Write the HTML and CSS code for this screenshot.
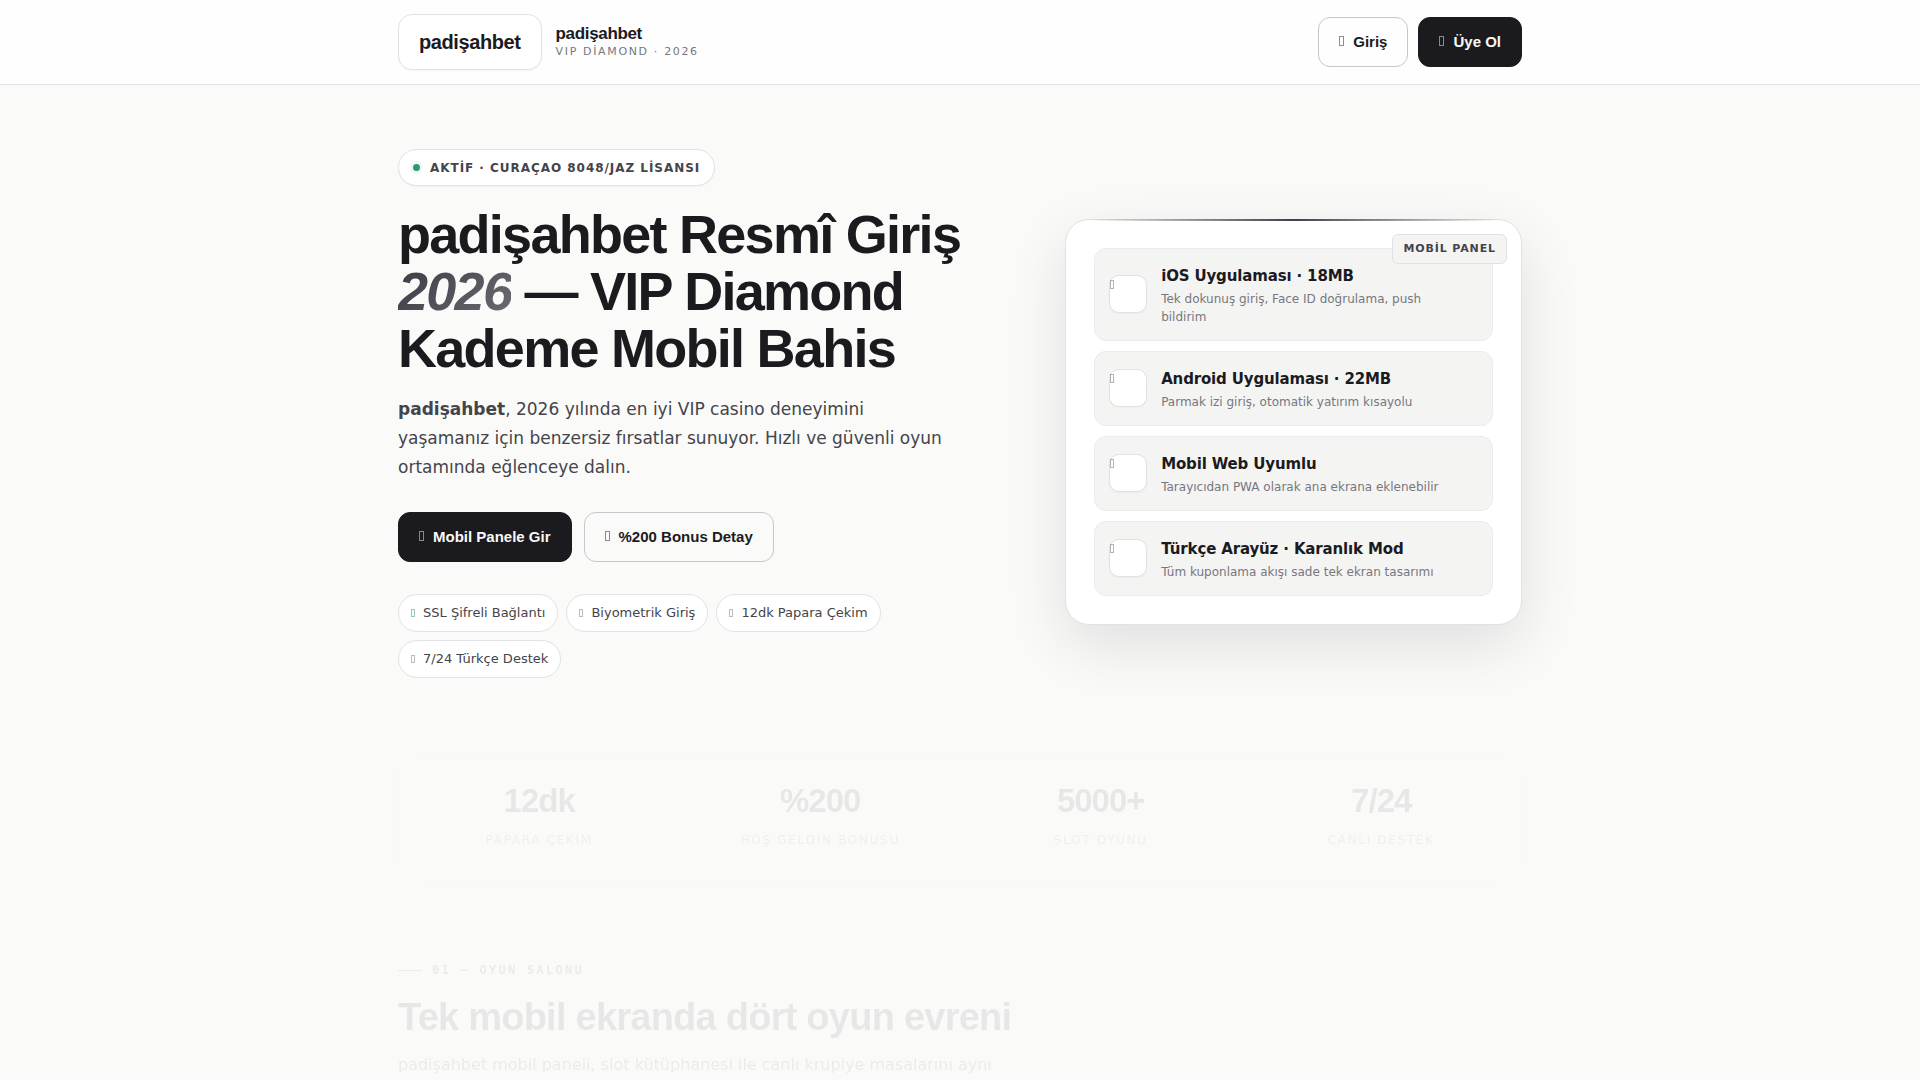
FILE: index.html
```html
<!DOCTYPE html>
<html lang="tr">
<head>
    <meta charset="UTF-8">
    <meta name="viewport" content="width=device-width, initial-scale=1.0">
    <title>padişahbet Resmî Giriş 2026</title>
    <link rel="stylesheet" href="styles.css">
</head>
<body>
    <!-- Üst menü -->
    <header class="site-header">
        <div class="container header-inner">
            <a href="#" class="brand">
                <span class="brand-logo">padişahbet</span>
                <span class="brand-text">
                    <span class="brand-name">padişahbet</span>
                    <span class="brand-sub">VIP DİAMOND · 2026</span>
                </span>
            </a>
            <div class="header-actions">
                <button type="button" class="btn btn-outline"><i class="icon"></i>Giriş</button>
                <button type="button" class="btn btn-dark"><i class="icon"></i>Üye Ol</button>
            </div>
        </div>
    </header>

    <main>
        <!-- Hero -->
        <section class="container hero">
            <div class="hero-left">
                <div class="license"><span class="dot"></span>AKTİF · CURAÇAO 8048/JAZ LİSANSI</div>
                <h1>padişahbet Resmî Giriş <em>2026</em> — VIP Diamond Kademe Mobil Bahis</h1>
                <p class="lead"><strong>padişahbet</strong>, 2026 yılında en iyi VIP casino deneyimini yaşamanız için benzersiz fırsatlar sunuyor. Hızlı ve güvenli oyun ortamında eğlenceye dalın.</p>
                <div class="hero-buttons">
                    <button type="button" class="btn btn-dark"><i class="icon"></i>Mobil Panele Gir</button>
                    <button type="button" class="btn btn-outline"><i class="icon"></i>%200 Bonus Detay</button>
                </div>
                <ul class="chips">
                    <li><i class="icon icon-green"></i>SSL Şifreli Bağlantı</li>
                    <li><i class="icon"></i>Biyometrik Giriş</li>
                    <li><i class="icon"></i>12dk Papara Çekim</li>
                    <li><i class="icon"></i>7/24 Türkçe Destek</li>
                </ul>
            </div>

            <div class="panel">
                <div class="feature">
                    <div class="feature-icon"><i class="icon"></i></div>
                    <div>
                        <h3>iOS Uygulaması · 18MB</h3>
                        <p>Tek dokunuş giriş, Face ID doğrulama, push bildirim</p>
                    </div>
                </div>
                <div class="feature">
                    <div class="feature-icon"><i class="icon"></i></div>
                    <div>
                        <h3>Android Uygulaması · 22MB</h3>
                        <p>Parmak izi giriş, otomatik yatırım kısayolu</p>
                    </div>
                </div>
                <div class="feature">
                    <div class="feature-icon"><i class="icon"></i></div>
                    <div>
                        <h3>Mobil Web Uyumlu</h3>
                        <p>Tarayıcıdan PWA olarak ana ekrana eklenebilir</p>
                    </div>
                </div>
                <div class="feature">
                    <div class="feature-icon"><i class="icon"></i></div>
                    <div>
                        <h3>Türkçe Arayüz · Karanlık Mod</h3>
                        <p>Tüm kuponlama akışı sade tek ekran tasarımı</p>
                    </div>
                </div>
                <span class="panel-tag">MOBİL PANEL</span>
            </div>
        </section>

        <!-- Rakamlar -->
        <section class="container">
            <div class="stats reveal">
                <div class="stat"><b>12dk</b><span>PAPARA ÇEKİM</span></div>
                <div class="stat"><b>%200</b><span>HOŞ GELDİN BONUSU</span></div>
                <div class="stat"><b>5000+</b><span>SLOT OYUNU</span></div>
                <div class="stat"><b>7/24</b><span>CANLI DESTEK</span></div>
            </div>
        </section>

        <!-- Oyun salonu -->
        <section class="container games">
            <div class="section-head reveal">
                <div class="eyebrow">01 — OYUN SALONU</div>
                <h2>Tek mobil ekranda dört oyun evreni</h2>
                <p>padişahbet mobil paneli, slot kütüphanesi ile canlı krupiye masalarını aynı</p>
            </div>
        </section>
    </main>
</body>
</html>
```

FILE: styles.css
```css
:root {
    --ink: #1b1b1f;
    --text: #44444b;
    --muted: #77777f;
    --line: #e2e2e6;
    --line-dark: #c6c6cd;
    --bg: #fafaf9;
    --soft: #f4f4f3;
    --green: #2f9873;
    --head: "Liberation Sans", Arial, sans-serif;
    --body: "DejaVu Sans", Verdana, sans-serif;
}
* {
    box-sizing: border-box;
    margin: 0;
    padding: 0;
}
body {
    background: var(--bg);
    color: var(--text);
    font-family: var(--body);
    font-size: 16px;
}
.container {
    max-width: 1180px;
    margin: 0 auto;
    padding: 0 28px;
}

/* Üst menü */
.site-header {
    background: #fefefe;
    border-bottom: 1px solid var(--line);
}
.header-inner {
    display: flex;
    justify-content: space-between;
    align-items: center;
    padding-top: 14px;
    padding-bottom: 14px;
}
.brand {
    display: flex;
    align-items: center;
    gap: 14px;
    text-decoration: none;
}
.brand-logo {
    padding: 0 20px;
    border: 1px solid var(--line);
    border-radius: 14px;
    background: #fff;
    box-shadow: 0 1px 2px rgba(0, 0, 0, 0.04);
    color: var(--ink);
    font: bold 20px/54px var(--head);
    letter-spacing: -0.02em;
}
.brand-text {
    display: flex;
    flex-direction: column;
}
.brand-name {
    color: var(--ink);
    font: bold 17px/20px var(--head);
    letter-spacing: -0.02em;
}
.brand-sub {
    color: var(--muted);
    font-size: 11px;
    line-height: 16px;
    letter-spacing: 0.15em;
}
.header-actions,
.hero-buttons {
    display: flex;
    gap: 10px;
}

/* Butonlar */
.btn {
    display: inline-flex;
    align-items: center;
    gap: 9px;
    height: 50px;
    padding: 0 20px;
    border: 1px solid var(--ink);
    border-radius: 12px;
    font: bold 15px/24px var(--head);
    cursor: pointer;
}
.btn-dark {
    background: var(--ink);
    color: #f8f8f7;
}
.btn-outline {
    background: transparent;
    border-color: var(--line-dark);
    color: var(--ink);
}
.icon {
    flex: none;
    width: 5px;
    height: 10px;
    border: 1px solid currentColor;
    opacity: 0.5;
}
.btn .icon {
    margin-bottom: 2px;
}

/* Hero */
.hero {
    display: grid;
    grid-template-columns: 1.2fr 0.9fr;
    gap: 58px;
    align-items: center;
    padding-top: 64px;
    padding-bottom: 61px;
}
.hero-left {
    padding-bottom: 16px;
}
.license {
    display: inline-flex;
    align-items: center;
    gap: 10px;
    height: 37px;
    padding: 0 14px;
    border: 1px solid var(--line);
    border-radius: 20px;
    background: #fff;
    box-shadow: 0 1px 2px rgba(0, 0, 0, 0.04);
    font-size: 12px;
    font-weight: bold;
    letter-spacing: 0.08em;
}
.dot {
    width: 7px;
    height: 7px;
    border-radius: 50%;
    background: var(--green);
    box-shadow: 0 0 0 3px rgba(47, 152, 115, 0.08);
}
h1 {
    margin: 20px 0 18px;
    color: var(--ink);
    font: bold 54px/57px var(--head);
    letter-spacing: -0.032em;
}
h1 em {
    background: linear-gradient(135deg, #3a3a42, #6c6c75);
    -webkit-background-clip: text;
    background-clip: text;
    color: transparent;
}
.lead {
    max-width: 560px;
    margin-bottom: 30px;
    font-size: 17px;
    line-height: 29px;
}
.hero-buttons {
    gap: 12px;
    margin-bottom: 32px;
}
.chips {
    display: flex;
    flex-wrap: wrap;
    gap: 8px;
    list-style: none;
}
.chips li {
    display: flex;
    align-items: center;
    gap: 8px;
    height: 38px;
    padding: 0 12px;
    border: 1px solid var(--line);
    border-radius: 20px;
    background: #fff;
    font-size: 13px;
    line-height: 20px;
}
.chips .icon {
    width: 4px;
    height: 8px;
    opacity: 0.35;
}
.chips .icon-green {
    border-color: var(--green);
    opacity: 0.5;
}

/* Mobil panel kartı */
.panel {
    position: relative;
    display: grid;
    gap: 10px;
    padding: 28px;
    border: 1px solid var(--line);
    border-radius: 24px;
    background: #fff;
    box-shadow: 0 20px 60px rgba(0, 0, 0, 0.11);
}
.panel::before {
    content: "";
    position: absolute;
    top: -1px;
    left: 20px;
    right: 20px;
    height: 2px;
    background: linear-gradient(90deg, transparent, #3f3f46, transparent);
}
.panel-tag {
    position: absolute;
    top: 14px;
    right: 14px;
    padding: 0 10px;
    border: 1px solid var(--line);
    border-radius: 6px;
    background: var(--soft);
    font-size: 11px;
    font-weight: bold;
    line-height: 28px;
    letter-spacing: 0.08em;
}
.feature {
    display: flex;
    align-items: center;
    gap: 14px;
    padding: 14px;
    border: 1px solid #ebebec;
    border-radius: 12px;
    background: var(--soft);
}
.feature-icon {
    flex: none;
    width: 38px;
    height: 38px;
    padding-top: 4px;
    border: 1px solid var(--line);
    border-radius: 10px;
    background: #fff;
    box-shadow: 0 1px 2px rgba(0, 0, 0, 0.04);
}
.feature-icon .icon {
    display: block;
    width: 4px;
    height: 9px;
    opacity: 0.4;
}
.feature h3 {
    color: var(--ink);
    font-size: 15px;
    line-height: 27px;
    letter-spacing: -0.01em;
}
.feature p {
    max-width: 300px;
    color: var(--muted);
    font-size: 12px;
    line-height: 18px;
}

/* Kaydırınca beliren bölümler */
.reveal {
    opacity: 0.08;
}
.stats {
    display: grid;
    grid-template-columns: repeat(4, 1fr);
    border: 1px solid var(--line);
    border-radius: 20px;
}
.stat {
    padding: 28px 16px;
    text-align: center;
}
.stat + .stat {
    border-left: 1px solid #f0f0f0;
}
.stat b {
    display: block;
    color: var(--ink);
    font: bold 33px/34px var(--head);
    letter-spacing: -0.03em;
    margin-bottom: 10px;
}
.stat span {
    display: block;
    color: var(--muted);
    font-size: 12px;
    line-height: 24px;
    letter-spacing: 0.14em;
}
.games {
    padding-top: 79px;
}
.eyebrow {
    display: flex;
    align-items: center;
    gap: 10px;
    font: bold 12px/20px "DejaVu Sans Mono", monospace;
    letter-spacing: 0.19em;
}
.eyebrow::before {
    content: "";
    width: 24px;
    height: 1px;
    background: var(--text);
}
.section-head h2 {
    margin: 15px 0 12px;
    color: var(--ink);
    font: bold 38px/44px var(--head);
    letter-spacing: -0.02em;
}
.section-head p {
    max-width: 640px;
    line-height: 28px;
}
```
